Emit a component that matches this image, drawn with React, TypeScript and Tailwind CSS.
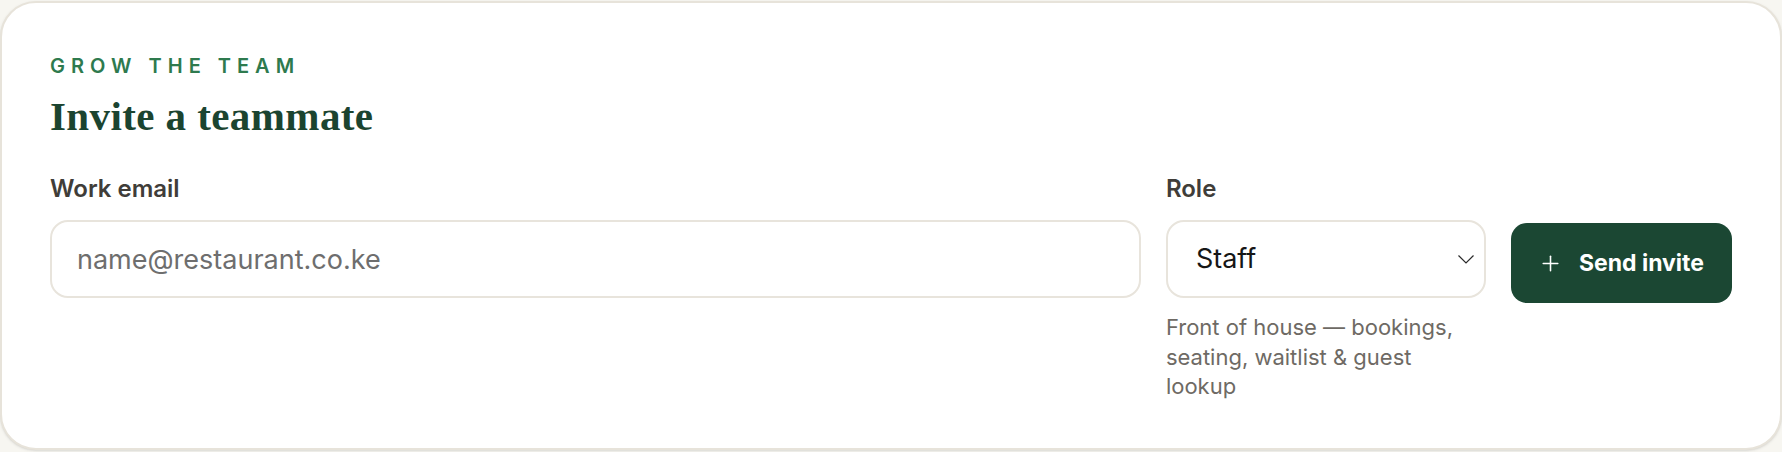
import { Plus } from "lucide-react";

const ROLES = [
  { value: "staff", label: "Staff", hint: "Front of house — bookings, seating, waitlist & guest lookup" },
  { value: "manager", label: "Manager", hint: "Everything staff can do, plus floor plans & reports" },
];

export default function App() {
  const role = ROLES[0];

  return (
    <div className="min-h-screen bg-[#f7f6f1] pt-[1px] font-['Inter',sans-serif]">
      <div className="rounded-[36px] border-2 border-[#e7e3da] bg-white px-12 pt-[49px] pb-[46px] shadow-sm">
        <p className="text-[20px] leading-[28px] font-semibold uppercase tracking-[0.3em] text-[#2e7a4e]">
          Grow the team
        </p>
        <h2 className="mt-3 font-['Liberation_Serif',serif] text-[41px] leading-[48px] font-bold tracking-[0.01em] text-[#1b4430]">
          Invite a teammate
        </h2>

        <div className="mt-[34px] grid grid-cols-[1fr_320px_auto] gap-x-[25px]">
          <div className="flex flex-col">
            <label className="text-[24px] leading-[30px] font-semibold text-[#403d39]">Work email</label>
            <input
              type="email"
              placeholder="name@restaurant.co.ke"
              className="mt-4 h-[78px] w-full rounded-[18px] border-2 border-[#e8e4dc] bg-white px-[25px] text-[27px] text-[#1a1a1a] placeholder:text-[#6e6e6e] outline-none"
            />
          </div>

          <div className="flex flex-col">
            <label className="text-[24px] leading-[30px] font-semibold text-[#403d39]">Role</label>
            <div className="relative mt-4">
              <select
                defaultValue={role.value}
                className="h-[78px] w-full appearance-none rounded-[18px] border-2 border-[#e8e4dc] bg-white pl-[28px] pr-12 text-[27px] text-[#161616] outline-none"
              >
                {ROLES.map((r) => (
                  <option key={r.value} value={r.value}>{r.label}</option>
                ))}
              </select>
              <svg
                className="pointer-events-none absolute right-[11px] top-1/2 -translate-y-1/2"
                width="18"
                height="12"
                viewBox="0 0 18 12"
                fill="none"
              >
                <path d="M1.5 2.5 9 10 16.5 2.5" stroke="#2a2a2a" strokeWidth="1.2" />
              </svg>
            </div>
            <p className="mt-[15px] text-[22px] leading-[29.5px] text-[#6e6a64]">{role.hint}</p>
          </div>

          <div className="pt-[49px]">
            <button className="flex h-[80px] items-center gap-4 rounded-[16px] bg-[#1b4733] pl-[27px] pr-[28px] text-[23px] font-bold text-white">
              <Plus size={25} strokeWidth={1.5} />
              Send invite
            </button>
          </div>
        </div>
      </div>
    </div>
  );
}
